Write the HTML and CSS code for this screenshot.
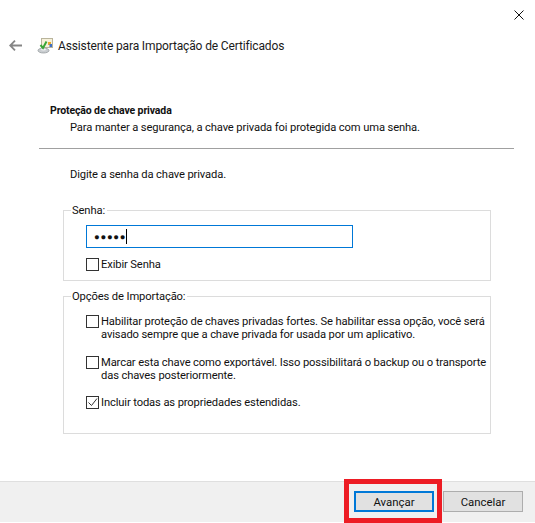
FILE: index.html
```html
<!DOCTYPE html>
<html lang="pt-BR">
<head>
    <meta charset="UTF-8">
    <meta name="viewport" content="width=device-width, initial-scale=1.0">
    <title>Assistente para Importação de Certificados</title>
    <link rel="stylesheet" href="styles.css">
</head>
<body>
    <div class="dialog">
        <div class="titlebar">
            <svg class="close-icon" width="10" height="10" viewBox="0 0 10 10">
                <path d="M.5.5l9 9M9.500.5l-9 9" stroke="#111" stroke-width="1" fill="none"/>
            </svg>
        </div>
        <div class="wizard-header">
            <svg class="back-icon" width="13" height="11" viewBox="0 0 13 11">
                <path d="M6 .7L1.200 5.500 6 10.300M1.500 5.500H13" stroke="#858585" stroke-width="1.800" fill="none"/>
            </svg>
            <svg class="wizard-icon" width="17" height="17" viewBox="0 0 17 17">
                <rect x="4.500" y="1.500" width="11" height="9" fill="#f6f1da" stroke="#b9b49c"/>
                <rect x="11" y="5" width="3" height="3" fill="#e8a92c"/>
                <rect x="12.500" y="7" width="2.500" height="3" fill="#3f6fc4"/>
                <ellipse cx="6.500" cy="13.500" rx="5.500" ry="2.500" fill="#c9cdd0" stroke="#8b9094" stroke-width=".7"/>
                <ellipse cx="6.500" cy="12.600" rx="2.500" ry="1" fill="#f2f4f5"/>
                <path d="M3.500 8l2.500 3 3.500-6.500" stroke="#3aa637" stroke-width="2" fill="none"/>
            </svg>
            <span class="wizard-title">Assistente para Importação de Certificados</span>
        </div>
        <div class="content">
            <div class="section-head">
                <h1>Proteção de chave privada</h1>
                <p>Para manter a segurança, a chave privada foi protegida com uma senha.</p>
            </div>
            <div class="divider"></div>
            <p class="prompt">Digite a senha da chave privada.</p>

            <fieldset class="group group-password">
                <legend>Senha:</legend>
                <div class="password-box"><span class="dots">●●●●●</span><span class="caret"></span></div>
                <div class="check-row">
                    <span class="checkbox"></span>
                    <span>Exibir Senha</span>
                </div>
            </fieldset>

            <fieldset class="group group-options">
                <legend>Opções de Importação:</legend>
                <div class="check-row">
                    <span class="checkbox"></span>
                    <span>Habilitar proteção de chaves privadas fortes. Se habilitar essa opção, você será<br>avisado sempre que a chave privada for usada por um aplicativo.</span>
                </div>
                <div class="check-row">
                    <span class="checkbox"></span>
                    <span>Marcar esta chave como exportável. Isso possibilitará o backup ou o transporte<br>das chaves posteriormente.</span>
                </div>
                <div class="check-row">
                    <span class="checkbox">
                        <svg width="11" height="11" viewBox="0 0 11 11">
                            <path d="M1.500 5.500l3 3 5.500-7" stroke="#333" stroke-width="1" fill="none"/>
                        </svg>
                    </span>
                    <span>Incluir todas as propriedades estendidas.</span>
                </div>
            </fieldset>
        </div>
        <div class="footer">
            <button class="btn btn-primary">Avançar</button>
            <button class="btn">Cancelar</button>
        </div>
        <div class="highlight"></div>
    </div>
</body>
</html>
```

FILE: styles.css
```css
* {
    margin: 0;
    padding: 0;
    box-sizing: border-box;
}

body {
    font-family: Roboto, "Noto Sans", sans-serif;
    font-size: 11.2px;
    line-height: 13px;
    letter-spacing: -0.125px;
    background: #fff;
    color: #111;
}

.dialog {
    position: relative;
    display: flex;
    flex-direction: column;
    width: 535px;
    height: 523px;
    overflow: hidden;
}

.titlebar {
    display: flex;
    justify-content: flex-end;
    height: 37px;
    padding: 10px 11px 0 0;
}

.close-icon {
    display: block;
}

.wizard-header {
    display: flex;
    align-items: center;
    height: 17px;
    padding-left: 9px;
}

.wizard-icon {
    margin-left: 15px;
}

.wizard-title {
    margin-left: 4px;
    padding-top: 1px;
    font-size: 12px;
    letter-spacing: -0.140px;
    color: #1a1a1a;
}

.content {
    flex: 1;
    padding: 50px 21px 0 39px;
}

.section-head h1 {
    margin-left: 11px;
    font-size: 10.500px;
    font-weight: 700;
    line-height: 13px;
}

.section-head p {
    margin: 4px 0 0 31px;
}

.divider {
    height: 1px;
    margin-top: 14px;
    background: #a0a0a0;
}

.prompt {
    margin: 19px 0 0 31px;
}

.group {
    margin: 23px 23px 0 24px;
    border: 1px solid #dcdcdc;
}

.group legend {
    margin-left: 7px;
    padding: 0 2px 0 1px;
}

.group > div {
    margin-left: 22px;
}

.group-password {
    height: 77px;
}

.group-options {
    height: 144px;
    margin-top: 9px;
}

.password-box {
    display: flex;
    align-items: center;
    width: 267px;
    height: 23px;
    margin-top: 8px;
    padding-left: 7px;
    border: 1px solid #0078d7;
}

.dots {
    font-size: 9.500px;
    letter-spacing: 0.700px;
}

.caret {
    width: 1px;
    height: 15px;
    background: #000;
}

.check-row {
    display: flex;
    align-items: flex-start;
    gap: 2px;
    margin-top: 10px;
    white-space: nowrap;
}

.group-options .check-row {
    margin-top: 15px;
}

.group-options .check-row:first-of-type {
    margin-top: 12px;
}

.group-options .check-row:last-child {
    margin-top: 14px;
}

.checkbox {
    flex: none;
    width: 13px;
    height: 13px;
    border: 1px solid #333;
    background: #fff;
}

.checkbox svg {
    display: block;
}

.footer {
    display: flex;
    justify-content: flex-end;
    gap: 9px;
    height: 41px;
    margin-bottom: 1px;
    padding: 9px 12px 0 0;
    background: #f0f0f0;
    border-top: 1px solid #dfdfdf;
}

.btn {
    width: 80px;
    height: 21px;
    font-family: inherit;
    font-size: 11.400px;
    color: #111;
    background: #e1e1e1;
    border: 1px solid #adadad;
}

.btn-primary {
    border: 2px solid #0078d7;
}

.highlight {
    position: absolute;
    left: 344px;
    top: 479px;
    width: 98px;
    height: 44px;
    border: 5px solid #ed1c24;
}
```
